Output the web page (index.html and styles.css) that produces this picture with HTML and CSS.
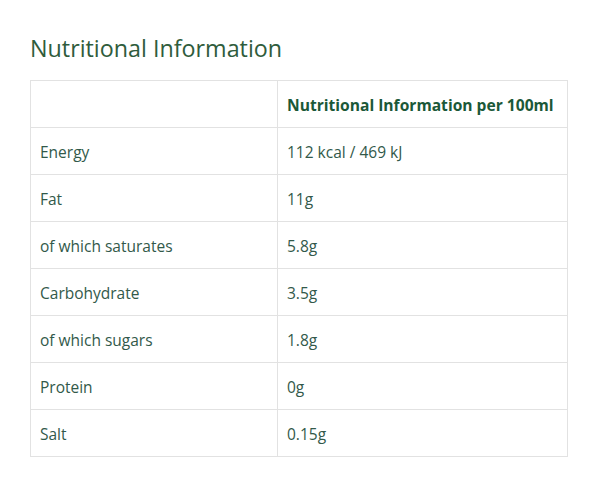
FILE: index.html
```html
<!DOCTYPE html>
<html>
<head>
<meta charset="utf-8">
<link rel="stylesheet" href="styles.css">
</head>
<body>
<div class="page">
  <h2 class="title">Nutritional Information</h2>
  <table class="nutri">
    <thead>
      <tr><th class="blank"></th><th>Nutritional Information per 100ml</th></tr>
    </thead>
    <tbody>
      <tr><td>Energy</td><td>112 kcal / 469 kJ</td></tr>
      <tr><td>Fat</td><td>11g</td></tr>
      <tr><td>of which saturates</td><td>5.8g</td></tr>
      <tr><td>Carbohydrate</td><td>3.5g</td></tr>
      <tr><td>of which sugars</td><td>1.8g</td></tr>
      <tr><td>Protein</td><td>0g</td></tr>
      <tr><td>Salt</td><td>0.15g</td></tr>
    </tbody>
  </table>
</div>
</body>
</html>
```
FILE: styles.css
```css
body {
  margin: 0;
  background: #ffffff;
  font-family: "Open Sans", "Noto Sans", sans-serif;
}
.page {
  padding: 32px 0 0 30px;
  width: 538px;
}
.title {
  margin: 0 0 16px 0;
  font-size: 23.3px;
  font-weight: 400;
  line-height: 32px;
  color: #2f5c3c;
}
.nutri {
  width: 538px;
  border-collapse: collapse;
  table-layout: fixed;
}
.nutri th, .nutri td {
  border: 1px solid #e2e2e2;
  height: 47px;
  padding: 2px 9px 0 9px;
  text-align: left;
  font-size: 15.5px;
  box-sizing: border-box;
}
.nutri th {
  font-weight: 700;
  font-size: 15.6px;
  color: #1b5838;
}
.nutri td {
  color: #32594a;
}
.nutri th.blank, .nutri td:first-child {
  width: 247px;
}
```
